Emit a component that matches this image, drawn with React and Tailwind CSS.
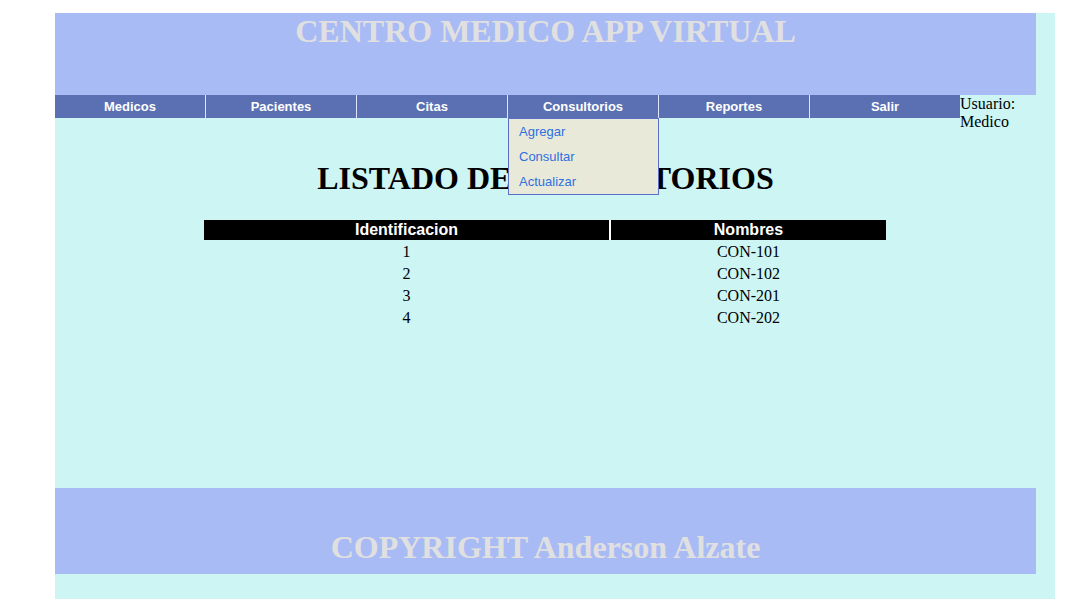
import React from 'react';

const menu = ['Medicos', 'Pacientes', 'Citas', 'Consultorios', 'Reportes', 'Salir'];
const submenu = ['Agregar', 'Consultar', 'Actualizar'];
const consultorios = [
    { id: 1, nombre: 'CON-101' },
    { id: 2, nombre: 'CON-102' },
    { id: 3, nombre: 'CON-201' },
    { id: 4, nombre: 'CON-202' },
];

export default function App() {
    return (
        <div className="min-h-screen bg-white pt-[13px] pl-[55px]" style={{ fontFamily: '"Liberation Serif", serif' }}>
            <div className="w-[1000px] bg-[#ccf5f4] pb-[40px]">
                <div className="w-[981px]">
                    {/* encabezado */}
                    <div className="h-[82px] bg-[#a9bbf5] pt-[1px]">
                        <h1 className="m-0 text-center text-[32px] font-bold leading-[34px] text-[#e0e0e0]">
                            CENTRO MEDICO APP VIRTUAL
                        </h1>
                    </div>

                    {/* menu */}
                    <div className="flex h-[23px] items-start">
                        <div className="flex h-[23px] w-[905px] bg-[#5a70b3]" style={{ fontFamily: '"Liberation Sans", Arial, sans-serif' }}>
                            {menu.map((item, i) => (
                                <div
                                    key={item}
                                    className={`relative flex flex-1 items-center justify-center text-[13px] font-bold text-white ${i > 0 ? 'border-l border-[#dce4ff]' : ''}`}
                                >
                                    {item}
                                    {item === 'Consultorios' && (
                                        <div className="absolute left-0 top-[23px] z-10 w-[151px] border border-[#5a70c8] bg-[#e9e9da]">
                                            {submenu.map((s) => (
                                                <div key={s} className="flex h-[25px] items-center pl-[10px] text-[13px] font-normal text-[#2f6fe0]">
                                                    {s}
                                                </div>
                                            ))}
                                        </div>
                                    )}
                                </div>
                            ))}
                        </div>
                        <div className="w-[76px] text-[16px] leading-[18px] text-black">Usuario: Medico</div>
                    </div>

                    {/* contenido */}
                    <div className="h-[370px] pt-[43px]">
                        <h2 className="m-0 text-center text-[32px] font-bold leading-[34px] text-black">
                            LISTADO DE CONSULTORIOS
                        </h2>
                        <div className="ml-[149px] mt-[25px] w-[682px]">
                            <div className="flex h-[20px] bg-white text-[16px] font-bold text-white" style={{ fontFamily: '"Liberation Sans", Arial, sans-serif' }}>
                                <div className="flex w-[405px] items-center justify-center bg-black">Identificacion</div>
                                <div className="ml-[2px] flex w-[275px] items-center justify-center bg-black">Nombres</div>
                            </div>
                            <div className="pt-[1px]">
                                {consultorios.map((c) => (
                                    <div key={c.id} className="flex h-[22px] items-center text-[16px] text-black">
                                        <div className="w-[405px] text-center">{c.id}</div>
                                        <div className="ml-[2px] w-[275px] text-center">{c.nombre}</div>
                                    </div>
                                ))}
                            </div>
                        </div>
                    </div>

                    {/* pie */}
                    <div className="h-[86px] bg-[#a9bbf5] pt-[42px]">
                        <h2 className="m-0 text-center text-[32px] font-bold leading-[34px] text-[#e0e0e0]">
                            COPYRIGHT Anderson Alzate
                        </h2>
                    </div>
                </div>
            </div>
        </div>
    );
}
